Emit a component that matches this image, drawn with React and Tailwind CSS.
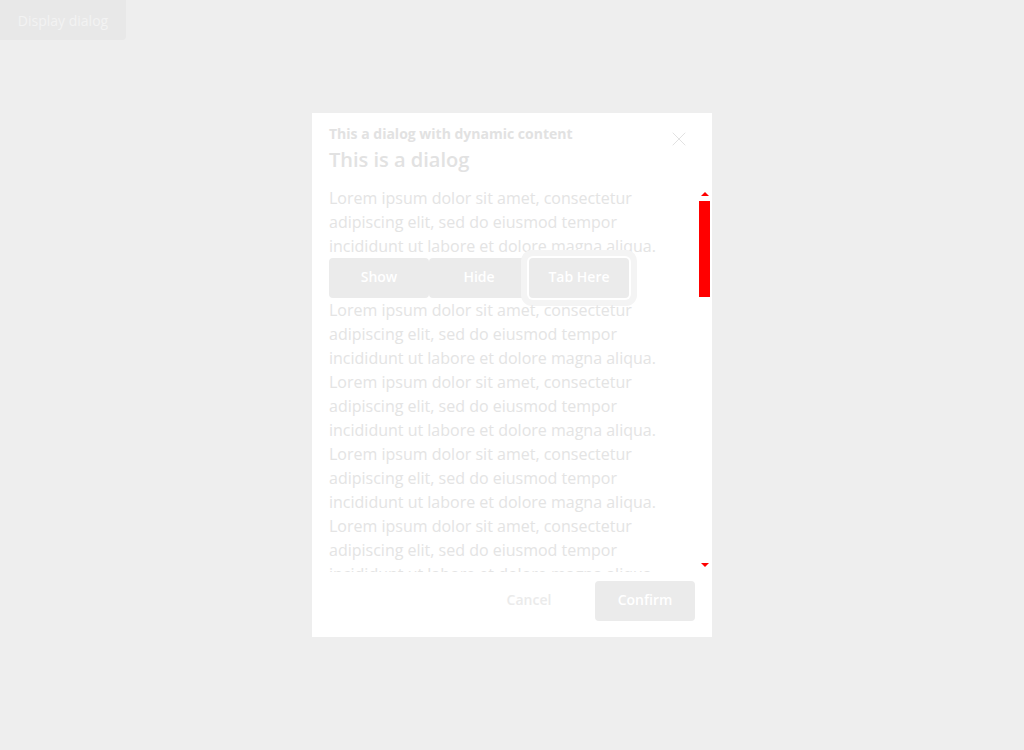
import { X } from "lucide-react";

const LOREM =
  "Lorem ipsum dolor sit amet, consectetur adipiscing elit, sed do eiusmod tempor incididunt ut labore et dolore magna aliqua.";

const after = Array.from({ length: 18 }, (_, i) => i);

export default function App() {
  return (
    <div
      className="relative w-full h-[750px] bg-[#eeeeee] overflow-hidden"
      style={{ fontFamily: '"Open Sans", "Liberation Sans", sans-serif' }}
    >
      <button className="h-10 w-[126px] bg-[#e8e8e8] text-[#f3f3f3] text-[14px] rounded-br">
        Display dialog
      </button>

      {/* dialog */}
      <div className="absolute left-[312px] top-[113px] w-[400px] h-[524px] bg-white flex flex-col">
        <div className="relative pl-[17px] pr-12 pt-[11px]">
          <div className="text-[14px] leading-5 font-bold text-[#e2e2e2]">
            This a dialog with dynamic content
          </div>
          <div className="mt-0.5 text-[20px] leading-7 font-semibold text-[#e2e2e2]">
            This is a dialog
          </div>
          <button className="absolute right-[21px] top-[14px] text-[#e2e2e2]">
            <X className="w-6 h-6" strokeWidth={1} />
          </button>
        </div>

        <div className="relative mt-3 h-[386px]">
          <div className="h-full overflow-y-auto pl-[17px] pr-[24px] [scrollbar-width:none]">
            <div className="text-[16px] leading-6 text-[#e4e4e4]">{LOREM}</div>
            <div className="flex h-10">
              <button className="w-[100px] h-10 rounded bg-[#ebebeb] text-white text-[14px] font-semibold leading-5 pb-0.5">
                Show
              </button>
              <button className="w-[100px] h-10 rounded bg-[#ebebeb] text-white text-[14px] font-semibold leading-5 pb-0.5">
                Hide
              </button>
              <button className="w-[100px] h-10 rounded bg-[#ebebeb] text-white text-[14px] font-semibold leading-5 pb-0.5 shadow-[0_0_0_2px_#ffffff,0_0_0_8px_#f4f4f4]">
                Tab Here
              </button>
            </div>
            {after.map((i) => (
              <div key={i} className="text-[16px] leading-6 text-[#e4e4e4]">
                {LOREM}
              </div>
            ))}
          </div>

          {/* scrollbar */}
          <div className="absolute right-0 top-0 w-[15px] h-full bg-white flex flex-col items-center">
            <div className="h-[15px] flex items-center justify-center">
              <div className="w-0 h-0 border-l-[4px] border-r-[4px] border-b-[4px] border-l-transparent border-r-transparent border-b-[#ff0000]" />
            </div>
            <div className="flex-1 w-full px-[2px]">
              <div className="w-full h-[96px] bg-[#ff0000]" />
            </div>
            <div className="h-[15px] flex items-center justify-center">
              <div className="w-0 h-0 border-l-[4px] border-r-[4px] border-t-[4px] border-l-transparent border-r-transparent border-t-[#ff0000]" />
            </div>
          </div>
        </div>

        <div className="flex justify-end gap-4 px-[17px] pt-[9px] pb-4">
          <button className="w-[100px] h-10 rounded text-[#ebebeb] text-[14px] font-semibold leading-5 pb-0.5">
            Cancel
          </button>
          <button className="w-[100px] h-10 rounded bg-[#ebebeb] text-white text-[14px] font-semibold leading-5 pb-0.5">
            Confirm
          </button>
        </div>
      </div>
    </div>
  );
}
